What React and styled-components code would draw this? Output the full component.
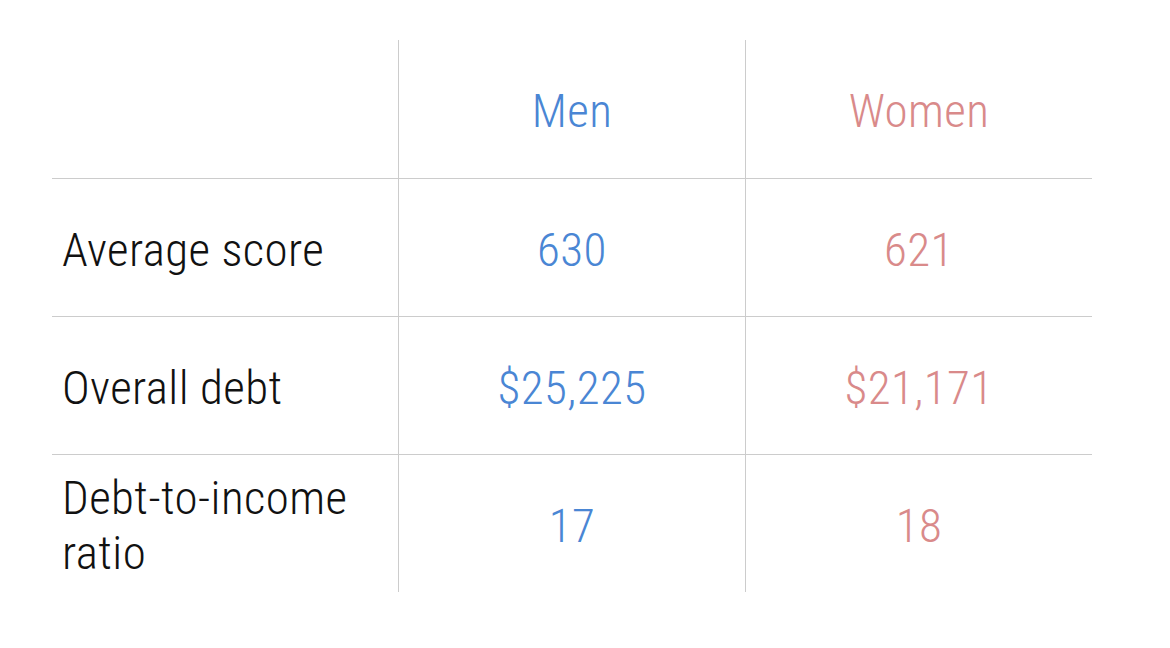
import styled, { createGlobalStyle } from 'styled-components'

const rows = [
  { label: 'Average score', men: '630', women: '621' },
  { label: 'Overall debt', men: '$25,225', women: '$21,171' },
  { label: 'Debt-to-income ratio', men: '17', women: '18' },
]

const App = () => {
  return (
    <Page>
      <GlobalStyle />
      <Table>
        <Cell $first $top />
        <Cell $top $tone="men">Men</Cell>
        <Cell $top $tone="women">Women</Cell>
        {rows.map((row) => (
          <Row key={row.label}>
            <Cell $first $label>
              {row.label}
            </Cell>
            <Cell $tone="men">{row.men}</Cell>
            <Cell $tone="women">{row.women}</Cell>
          </Row>
        ))}
      </Table>
    </Page>
  )
}

const GlobalStyle = createGlobalStyle`
  body {
    margin: 0;
    background: #ffffff;
  }
`

const Page = styled.main`
  width: 1170px;
  height: 648px;
  padding: 40px 0 0 52px;
  box-sizing: border-box;
  font-family: 'Roboto Condensed', 'Open Sans', 'Liberation Sans', sans-serif;
  font-weight: 300;
`

const Table = styled.div`
  display: grid;
  grid-template-columns: 346px 347px 347px;
  grid-auto-rows: 138px;
  width: 1040px;
`

const Row = styled.div`
  display: contents;
`

const colors = {
  men: '#4a86d4',
  women: '#d98a8a',
}

const Cell = styled.div`
  display: flex;
  align-items: center;
  justify-content: ${(p) => (p.$label ? 'flex-start' : 'center')};
  padding: ${(p) => (p.$label ? '3px 14px 0 10px' : '3px 0 0 0')};
  border-top: ${(p) => (p.$top ? 'none' : '1px solid #cccccc')};
  border-left: ${(p) => (p.$first ? 'none' : '1px solid #cccccc')};
  color: ${(p) => colors[p.$tone] || '#111111'};
  font-size: 47px;
  letter-spacing: 0.4px;
  line-height: 55px;
  box-sizing: border-box;
`

export default App
